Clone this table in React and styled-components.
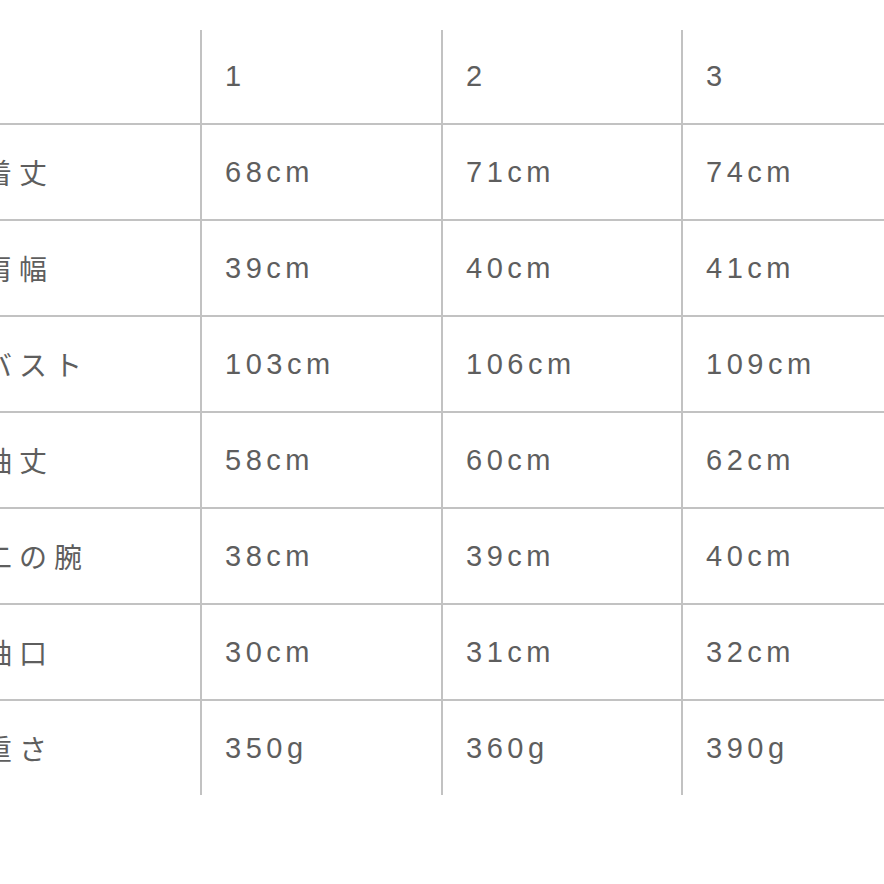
import React from "react";
import styled, { createGlobalStyle } from "styled-components";

const GlobalStyle = createGlobalStyle`
  html, body {
    margin: 0;
    padding: 0;
    background: #ffffff;
    overflow: hidden;
  }
`;

const Page = styled.div`
  width: 884px;
  height: 884px;
  overflow: hidden;
  background: #ffffff;
`;

// first column runs off the left edge, as in the photo
const SizeGrid = styled.div`
  display: grid;
  grid-template-columns: 240px 241px 240px 240px;
  margin-top: 30px;
  margin-left: -40px;
  width: max-content;
  color: #5e5e5e;
`;

const Cell = styled.div`
  box-sizing: border-box;
  height: ${(p) => (p.$head ? "93px" : "96px")};
  display: flex;
  align-items: center;
  padding-left: ${(p) => (p.$label ? "24px" : "23px")};
  font-size: ${(p) => (p.$label ? "28px" : "29px")};
  letter-spacing: ${(p) => (p.$label ? "7px" : "4.5px")};
  border-top: ${(p) => (p.$head ? "none" : "2px solid #c2c2c2")};
  border-left: ${(p) => (p.$first ? "none" : "2px solid #c2c2c2")};
  font-family: ${(p) =>
    p.$label
      ? `"Noto Sans CJK JP", sans-serif`
      : `"Liberation Sans", "Noto Sans CJK JP", sans-serif`};
`;

const sizes = ["1", "2", "3"];

const rows = [
  { label: "着丈", values: ["68cm", "71cm", "74cm"] },
  { label: "肩幅", values: ["39cm", "40cm", "41cm"] },
  { label: "バスト", values: ["103cm", "106cm", "109cm"] },
  { label: "袖丈", values: ["58cm", "60cm", "62cm"] },
  { label: "二の腕", values: ["38cm", "39cm", "40cm"] },
  { label: "袖口", values: ["30cm", "31cm", "32cm"] },
  { label: "重さ", values: ["350g", "360g", "390g"] },
];

const App = () => {
  return (
    <Page>
      <GlobalStyle />
      <SizeGrid>
        <Cell $head $first />
        {sizes.map((s) => (
          <Cell $head key={s}>
            {s}
          </Cell>
        ))}
        {rows.map((row) => (
          <React.Fragment key={row.label}>
            <Cell $first $label>
              {row.label}
            </Cell>
            {row.values.map((v, i) => (
              <Cell key={i}>{v}</Cell>
            ))}
          </React.Fragment>
        ))}
      </SizeGrid>
    </Page>
  );
};

export default App;
